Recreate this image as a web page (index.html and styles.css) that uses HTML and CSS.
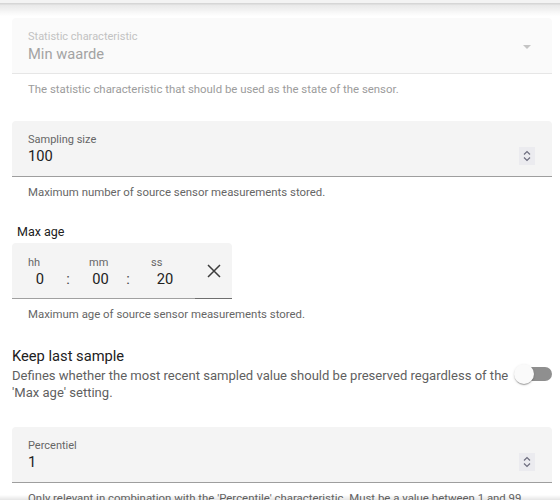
FILE: index.html
```html
<!DOCTYPE html>
<html lang="en">
<head>
<meta charset="utf-8">
<title>Statistics options</title>
<link rel="stylesheet" href="styles.css">
</head>
<body>
<div class="edge edge--top"></div>

<main class="form">
  <section class="row">
    <div class="field field--disabled">
      <div class="field__text">
        <span class="field__label">Statistic characteristic</span>
        <span class="field__value">Min waarde</span>
      </div>
      <span class="select-arrow"></span>
    </div>
    <p class="helper helper--disabled">The statistic characteristic that should be used as the state of the sensor.</p>
  </section>

  <section class="row">
    <div class="field">
      <div class="field__text">
        <span class="field__label">Sampling size</span>
        <span class="field__value">100</span>
      </div>
      <span class="spinner">
        <svg width="16" height="18" viewBox="0 0 16 18"><path d="M5 7.5 8 4.5 11 7.5M5 10.5 8 13.5 11 10.5" fill="none" stroke="#6d6d7e" stroke-width="1.2"/></svg>
      </span>
    </div>
    <p class="helper">Maximum number of source sensor measurements stored.</p>
  </section>

  <section class="row">
    <div class="duration__title">Max age</div>
    <div class="duration">
      <div class="duration__inputs">
        <div class="tcol tcol--hh"><span class="tcol__label">hh</span><span class="tcol__value">0</span></div>
        <span class="tsep">:</span>
        <div class="tcol tcol--mm"><span class="tcol__label">mm</span><span class="tcol__value">00</span></div>
        <span class="tsep">:</span>
        <div class="tcol tcol--ss"><span class="tcol__label">ss</span><span class="tcol__value">20</span></div>
      </div>
      <button class="clear" type="button" aria-label="Clear">
        <svg width="14" height="14" viewBox="0 0 14 14"><path d="M1 1 13 13M13 1 1 13" fill="none" stroke="#3c3c3c" stroke-width="1.5"/></svg>
      </button>
    </div>
    <p class="helper">Maximum age of source sensor measurements stored.</p>
  </section>

  <section class="row toggle-row">
    <div class="toggle-text">
      <div class="toggle-title">Keep last sample</div>
      <div class="toggle-desc">Defines whether the most recent sampled value should be preserved regardless of the 'Max age' setting.</div>
    </div>
    <span class="switch"><span class="switch__track"></span><span class="switch__thumb"></span></span>
  </section>

  <section class="row">
    <div class="field">
      <div class="field__text">
        <span class="field__label">Percentiel</span>
        <span class="field__value">1</span>
      </div>
      <span class="spinner">
        <svg width="16" height="18" viewBox="0 0 16 18"><path d="M5 7.5 8 4.5 11 7.5M5 10.5 8 13.5 11 10.5" fill="none" stroke="#6d6d7e" stroke-width="1.2"/></svg>
      </span>
    </div>
    <p class="helper">Only relevant in combination with the 'Percentile' characteristic. Must be a value between 1 and 99.</p>
  </section>
</main>

<div class="edge edge--bottom"></div>
</body>
</html>
```

FILE: styles.css
```css
* { box-sizing: border-box; }

html, body {
  margin: 0;
  background: #fff;
  overflow: hidden;
}

body {
  font-family: Roboto, "Noto Sans", sans-serif;
  color: #212121;
  height: 500px;
}

/* shadows of the header and footer bars around the scroll area */
.edge {
  position: fixed;
  left: 0;
  right: 0;
  pointer-events: none;
}
.edge--top {
  top: 0;
  height: 16px;
  background: linear-gradient(to bottom, #f3f3f3 0, #f3f3f3 3px, #d6d6d6 3px, #d6d6d6 4px, #e8e8e8 5px, rgba(255,255,255,0) 16px);
}
.edge--bottom {
  bottom: 0;
  height: 5px;
  background: linear-gradient(to bottom, rgba(0,0,0,0) 0, rgba(0,0,0,0.1) 100%);
}

.form {
  padding: 18px 8px 0 12px;
  display: flex;
  flex-direction: column;
  gap: 24px;
}

/* filled text field */
.field {
  height: 56px;
  display: flex;
  align-items: flex-start;
  padding: 12px 17px 0 16px;
  background: #f4f4f4;
  border-bottom: 1px solid #9e9e9e;
  border-radius: 4px 4px 0 0;
}
.field__text {
  flex: 1;
  display: flex;
  flex-direction: column;
}
.field__label {
  font-size: 11px;
  line-height: 14px;
  color: #666;
}
.field__value {
  font-size: 14.7px;
  line-height: 18px;
  color: #212121;
}
.field--disabled {
  background: #fafafa;
  border-bottom-color: #e6e6e6;
}
.field--disabled .field__label { color: #c2c2c2; }
.field--disabled .field__value {
  color: #a3a3a3;
  margin-top: 1px;
}

.select-arrow {
  margin: 15px 4px 0 0;
  width: 0;
  height: 0;
  border-left: 4px solid transparent;
  border-right: 4px solid transparent;
  border-top: 4px solid #c4c4c4;
}

.spinner {
  margin-top: 14px;
  width: 16px;
  height: 18px;
  background: #ebebef;
  display: flex;
}

.helper {
  margin: 0;
  padding: 7px 16px 0;
  font-size: 11.4px;
  line-height: 16px;
  color: #666;
}
.helper--disabled { color: #9c9c9c; }

/* duration picker */
.duration__title {
  padding-left: 5px;
  font-size: 12.5px;
  line-height: 16px;
  margin-bottom: 3px;
  color: #212121;
}
.duration {
  width: 220px;
  height: 56px;
  display: flex;
  background: #f4f4f4;
  border-radius: 4px 4px 0 0;
}
.duration__inputs {
  flex: 1;
  display: flex;
  align-items: flex-start;
  padding: 13px 0 0 16px;
  border-bottom: 1px solid #a0a0a0;
}
.tcol {
  display: flex;
  flex-direction: column;
}
.tcol__label {
  font-size: 11px;
  line-height: 14px;
  color: #666;
}
.tcol__value {
  font-size: 14.7px;
  line-height: 18px;
  text-align: center;
  color: #212121;
}
.tcol--hh { width: 24px; }
.tcol--mm { width: 23px; margin-left: 5px; }
.tcol--ss { width: 28px; margin-left: 7px; }
.tsep {
  width: 32px;
  margin-top: 14px;
  font-size: 14.7px;
  line-height: 18px;
  text-align: center;
  color: #444;
}
.clear {
  width: 37px;
  padding: 0 0 0 1px;
  border: 0;
  border-bottom: 1px solid #6e6e6e;
  background: transparent;
  display: flex;
  align-items: center;
  justify-content: center;
}

/* toggle row */
.toggle-row {
  display: flex;
  align-items: center;
  padding-bottom: 2px;
}
.toggle-text {
  width: 503px;
}
.toggle-title {
  font-size: 14.7px;
  line-height: 21px;
  color: #212121;
}
.toggle-desc {
  font-size: 13.05px;
  line-height: 17px;
  color: #5f5f5f;
}
.switch {
  position: relative;
  width: 38px;
  height: 20px;
}
.switch__track {
  position: absolute;
  left: 2px;
  right: 0;
  top: 3px;
  height: 14px;
  border-radius: 7px;
  background: #8f8f8f;
}
.switch__thumb {
  position: absolute;
  left: 0;
  top: 0;
  width: 20px;
  height: 20px;
  border-radius: 50%;
  background: #fafafa;
  box-shadow: 0 2px 1px -1px rgba(0,0,0,.2), 0 1px 1px rgba(0,0,0,.14), 0 1px 3px rgba(0,0,0,.12);
}
```
